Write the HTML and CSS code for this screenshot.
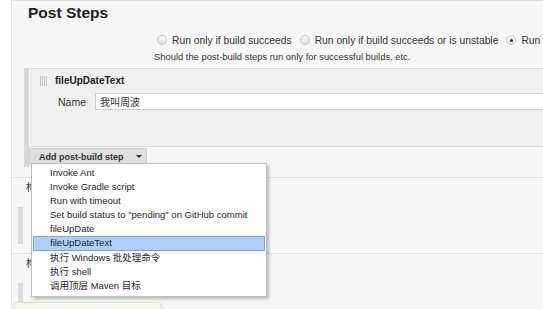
FILE: index.html
```html
<!DOCTYPE html>
<html>
  <head>
    <title>Post Steps</title>
    <link rel="stylesheet" href="styles.css">
  </head>
  <body>
    <div class="page">
      <h2 class="title">Post Steps</h2>
      <div class="options">
        <label class="opt"><span class="radio"></span>Run only if build succeeds</label>
        <label class="opt"><span class="radio"></span>Run only if build succeeds or is unstable</label>
        <label class="opt"><span class="radio on"></span>Run regardless of build result</label>
      </div>
      <div class="help">Should the post-build steps run only for successful builds, etc.</div>

      <div class="steps">
        <div class="chunk">
          <div class="chunk-head"><span class="handle"></span>fileUpDateText</div>
          <div class="field">
            <span class="label">Name</span>
            <input class="text" type="text" value="我叫周波">
          </div>
        </div>
        <div class="add-row">
          <button class="add-btn">Add post-build step <span class="caret"></span></button>
        </div>
      </div>

      <div class="section">
        <div class="sec-title">构</div>
        <div class="sec-bar"></div>
      </div>
      <div class="section">
        <div class="sec-title">构</div>
        <div class="sec-bar short"></div>
      </div>
      <div class="notice"></div>

      <ul class="menu">
        <li>Invoke Ant</li>
        <li>Invoke Gradle script</li>
        <li>Run with timeout</li>
        <li>Set build status to "pending" on GitHub commit</li>
        <li>fileUpDate</li>
        <li class="active">fileUpDateText</li>
        <li>执行 Windows 批处理命令</li>
        <li>执行 shell</li>
        <li>调用顶层 Maven 目标</li>
      </ul>
    </div>
  </body>
</html>
```

FILE: styles.css
```css
body { margin: 0; background: #fff; font-family: "Liberation Sans", Arial, "Noto Sans CJK SC", sans-serif; color: #333; }

.page { position: relative; margin-left: 11px; height: 308px; overflow: hidden; background: #f7f7f7; border-left: 1px solid #e2e2e2; border-top: 1px solid #e2e2e2; }

.title { margin: 0; padding: 2px 0 0 16px; font-size: 15.5px; line-height: 20px; font-weight: bold; color: #222; }

.options { display: flex; align-items: center; height: 14px; margin-top: 10px; padding-left: 145px; font-size: 10.3px; white-space: nowrap; }
.opt { display: flex; align-items: center; margin-right: 8px; }
.radio { position: relative; width: 10px; height: 10px; margin-right: 5px; box-sizing: border-box; border-radius: 50%; border: 1px solid #c4c4c4; background: linear-gradient(#fbfbfb, #dedede); }
.radio.on::after { content: ""; position: absolute; left: 2.5px; top: 2.5px; width: 3px; height: 3px; border-radius: 50%; background: #333; }

.help { margin-top: 4px; padding-left: 142px; font-size: 9.4px; line-height: 12px; }

.steps { margin: 5px 0 0 12px; border-left: 5px solid #d8d8d8; }
.chunk { height: 77px; background: #f0f0f0; border-top: 1px solid #dcdcdc; border-bottom: 1px solid #dcdcdc; border-left: 1px solid #f8f8f8; }
.chunk-head { display: flex; align-items: center; padding: 6px 0 0 10px; font-size: 10px; font-weight: bold; color: #222; line-height: 12px; }
.handle { width: 8px; height: 10px; margin-right: 7px; background: repeating-linear-gradient(90deg, #c4c4c4 0 1px, transparent 1px 2px); }
.field { display: flex; align-items: center; margin-top: 6px; padding-left: 28px; }
.label { width: 37px; font-size: 10.5px; }
.text { flex: 1; height: 17px; margin: 0; padding: 0 4px; box-sizing: border-box; border: 1px solid #cfcfcf; border-right: none; background: #fff; font: 10px "Liberation Sans", "Noto Sans CJK SC", sans-serif; color: #333; }

.add-row { padding: 1px 0 2px 0; }
.add-btn { display: flex; align-items: center; width: 118px; height: 17px; margin: 0; padding: 0 0 0 9px; border: 1px solid #d0d0d0; border-radius: 0 0 2px 2px; background: #dedede; font: bold 9px "Liberation Sans", Arial, sans-serif; color: #333; }
.caret { margin-left: 12px; border-top: 3px solid #333; border-left: 3px solid transparent; border-right: 3px solid transparent; }

.section { border-top: 1px solid #e2e2e2; margin-top: 10px; padding-top: 4px; }
.section + .section { margin-top: 9px; }
.sec-title { padding-left: 14px; font-size: 10px; line-height: 12px; }
.sec-bar { width: 5px; height: 37px; margin: 13px 0 0 6px; background: #dcdcdc; }
.sec-bar.short { height: 19px; margin-top: 13px; }

.notice { width: 149px; height: 12px; border: 1px solid #d3e4c8; border-bottom: none; border-radius: 6px 6px 0 0; background: #f3f9ee; }

.menu { position: absolute; left: 19px; top: 162px; width: 234px; margin: 0; padding: 2px 0 3px; list-style: none; background: #fff; border: 1px solid #bdbdbd; box-shadow: 2px 2px 3px rgba(0, 0, 0, 0.25); font-size: 9.5px; color: #1f1d2c; }
.menu li { height: 14.1px; line-height: 14.1px; padding-left: 18px; white-space: nowrap; }
.menu li.active { margin: 0 1px; padding-left: 16px; background: #b0cefa; border: 1px solid #77a4ec; height: 12.1px; line-height: 12.1px; }
```
